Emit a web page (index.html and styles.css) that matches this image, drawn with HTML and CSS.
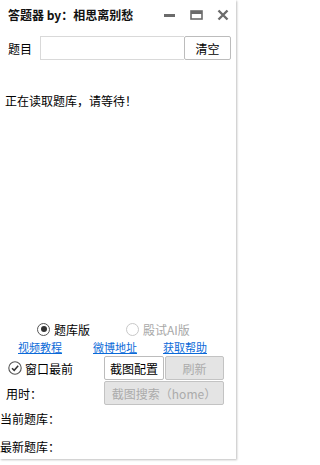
FILE: index.html
```html
<!DOCTYPE html>
<html lang="zh">
<head>
<meta charset="utf-8">
<link rel="stylesheet" href="styles.css">
</head>
<body>
<div class="panel">
  <div class="titlebar">
    <span class="title">答题器 by：相思离别愁</span>
    <div class="winctl">
      <svg class="ic" width="12" height="12" viewBox="0 0 12 12"><rect x="0" y="5" width="11" height="3" fill="#6b6b6b"/></svg>
      <svg class="ic" width="13" height="12" viewBox="0 0 13 12"><rect x="1" y="2" width="11" height="8" fill="none" stroke="#6b6b6b" stroke-width="1.6"/><rect x="1" y="2" width="11" height="3" fill="#6b6b6b"/></svg>
      <svg class="ic" width="12" height="12" viewBox="0 0 12 12"><path d="M1.5 1.5 L10.5 10.5 M10.5 1.5 L1.5 10.5" stroke="#6b6b6b" stroke-width="2.4"/></svg>
    </div>
  </div>
  <div class="qrow">
    <span class="lbl">题目</span>
    <input class="qinput" type="text">
    <button class="btn">清空</button>
  </div>
  <div class="msg">正在读取题库，请等待！</div>
  <div class="spacer"></div>
  <div class="radios">
    <span class="opt"><span class="radio on"></span>题库版</span>
    <span class="opt dis"><span class="radio"></span>殿试AI版</span>
  </div>
  <div class="links">
    <a href="#">视频教程</a>
    <a href="#">微博地址</a>
    <a href="#">获取帮助</a>
  </div>
  <div class="ctlrow">
    <span class="chk"><svg width="14" height="14" viewBox="0 0 14 14"><circle cx="7" cy="7" r="6.2" fill="#fff" stroke="#555" stroke-width="1.1"/><path d="M4 7.2 L6.2 9.3 L10.2 4.8" fill="none" stroke="#333" stroke-width="1.5"/></svg>窗口最前</span>
    <div class="btns">
      <button class="btn b60">截图配置</button>
      <button class="btn b60 disabled">刷新</button>
    </div>
  </div>
  <div class="ctlrow2">
    <span class="time">用时：</span>
    <button class="btn wide disabled">截图搜索（home）</button>
  </div>
  <div class="info first">当前题库：</div>
  <div class="info second">最新题库：</div>
</div>
</body>
</html>
```
FILE: styles.css
```css
html, body {
  margin: 0;
  padding: 0;
  background: #fff;
}
body {
  font-family: "Microsoft YaHei", "Noto Sans CJK SC", "Noto Sans", sans-serif;
  font-size: 12px;
  color: #000;
  width: 241px;
  height: 465px;
  overflow: hidden;
}
.panel {
  width: 236px;
  height: 459px;
  background: #fff;
  box-shadow: 1px 1px 2px rgba(0,0,0,0.25);
  display: flex;
  flex-direction: column;
  position: relative;
}
.titlebar {
  height: 30px;
  display: flex;
  align-items: center;
  justify-content: space-between;
  padding: 0 8px 0 8px;
}
.title {
  font-weight: bold;
  font-size: 12px;
  color: #111;
  line-height: 16px;
}
.winctl {
  display: flex;
  align-items: center;
  gap: 14px;
  margin-right: -1px;
}
.ic { display: block; }
.qrow {
  display: flex;
  align-items: center;
  margin-top: 6px;
  height: 24px;
  padding-left: 8px;
}
.lbl { width: 32px; }
.qinput {
  box-sizing: border-box;
  width: 144px;
  height: 24px;
  border: 1px solid #d9d9d9;
  border-right: none;
  margin: 0;
  padding: 0;
  outline: none;
}
.btn {
  box-sizing: border-box;
  font-family: inherit;
  font-size: 12px;
  background: #fff;
  border: 1px solid #bcbcbc;
  border-radius: 2px;
  color: #000;
  height: 24px;
  padding: 0;
  margin: 0;
}
.qrow .btn { width: 47px; }
.msg {
  margin-top: 32px;
  padding-left: 5px;
  line-height: 18px;
}
.spacer { flex: 1; }
.radios {
  display: flex;
  align-items: center;
  height: 18px;
  padding-left: 37px;
  gap: 36px;
}
.opt {
  display: flex;
  align-items: center;
  gap: 4px;
}
.opt.dis { color: #a8a8a8; }
.radio {
  box-sizing: border-box;
  width: 13px;
  height: 13px;
  border-radius: 50%;
  border: 1px solid #555;
  background: #fff;
  position: relative;
}
.opt.dis .radio { border-color: #c8c8c8; }
.radio.on::after {
  content: "";
  position: absolute;
  left: 2.5px;
  top: 2.5px;
  width: 6px;
  height: 6px;
  border-radius: 50%;
  background: #333;
}
.links {
  display: flex;
  height: 18px;
  align-items: center;
  padding-left: 18px;
  font-size: 11px;
}
.links a {
  color: #0b6ad8;
  text-decoration: underline;
}
.links a:nth-child(2) { margin-left: 31px; }
.links a:nth-child(3) { margin-left: 26px; }
.ctlrow {
  display: flex;
  align-items: center;
  height: 24px;
}
.chk {
  display: flex;
  align-items: center;
  gap: 3px;
  padding-left: 8px;
  width: 96px;
}
.chk svg { display: block; }
.btns { display: flex; gap: 1px; }
.b60 { width: 60px; }
.b60 + .b60 { width: 59px; }
.btn.disabled {
  background: #e4e4e4;
  color: #ababab;
  border-color: #c3c3c3;
}
.ctlrow2 {
  display: flex;
  align-items: center;
  height: 24px;
  margin-top: 1px;
}
.time {
  padding-left: 6px;
  width: 98px;
}
.wide { width: 120px; }
.info {
  line-height: 18px;
  padding-left: 0;
}
.info.first { margin-top: 5px; }
.info.second { margin-top: 10px; margin-bottom: 3px; }
```
